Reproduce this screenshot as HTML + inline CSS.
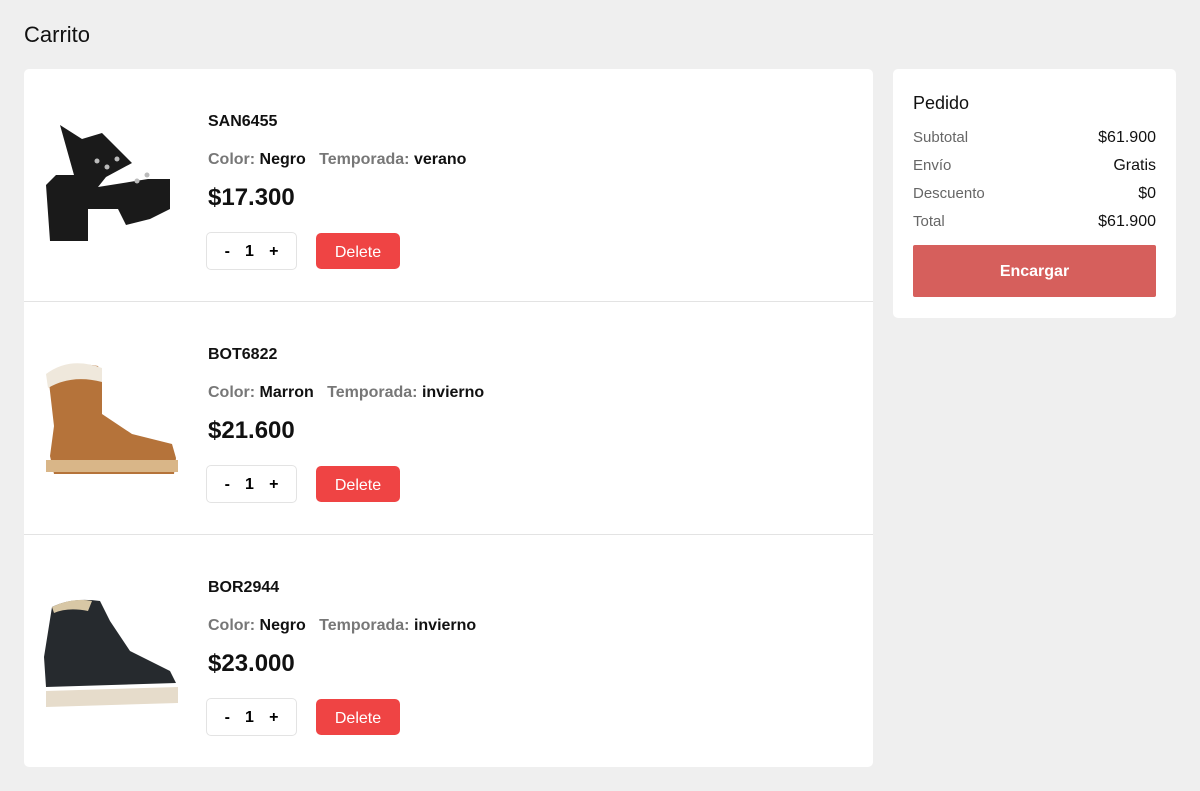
<!DOCTYPE html>
<html><head><style>
*{box-sizing:border-box;margin:0;padding:0}
body{width:1200px;height:791px;background:#efefef;font-family:"Liberation Sans",sans-serif;position:relative;overflow:hidden}
h1{position:absolute;left:24px;top:22px;font-size:22px;font-weight:400;color:#111}
.card{position:absolute;left:24px;top:69px;width:849px;height:698px;background:#fff;border-radius:5px}
.row{position:absolute;left:0;width:849px;height:233px;border-bottom:1px solid #e3e3e3}
.row:last-child{border-bottom:none}
.img{position:absolute;left:18px;top:52px;width:140px;height:124px}
.code{position:absolute;left:184px;top:44px;font-size:16px;font-weight:700;color:#111}
.meta{position:absolute;left:184px;top:82px;font-size:16px;color:#777;font-weight:700}
.meta b{color:#111}
.price{position:absolute;left:184px;top:115px;font-size:24px;font-weight:700;color:#111}
.qty{position:absolute;left:182px;top:163px;width:91px;height:38px;border:1px solid #e3e3e3;border-radius:5px;font-size:16px;font-weight:700;display:flex;justify-content:space-around;align-items:center;padding:2px 10px 0}
.del{position:absolute;left:292px;top:164px;width:84px;height:36px;background:#ef4444;border-radius:5px;color:#fff;font-size:16px;display:flex;align-items:center;justify-content:center;padding-top:3px}
.sum{position:absolute;left:893px;top:69px;width:283px;height:249px;background:#fff;border-radius:5px}
.sum h2{position:absolute;left:20px;top:24px;font-size:18px;font-weight:400;color:#111}
.line{position:absolute;left:20px;width:243px;display:flex;justify-content:space-between;font-size:15px}
.line span:first-child{color:#666}
.line span:last-child{color:#111;font-size:16px}
.btn{position:absolute;left:20px;top:176px;width:243px;height:52px;background:#d65f5c;border-radius:2px;color:#fff;font-weight:700;font-size:16px;display:flex;align-items:center;justify-content:center;padding-top:2px}
</style></head><body>
<h1>Carrito</h1>
<div class="card">
 <div class="row" style="top:0">
  <svg class="img" viewBox="0 0 140 124"><path d="M18 4l22 14 20-6 30 30 -26 14 -8 10 50-8 22 0 0 30 -20 10 -24 6 -8 -16 -30 0 0 32 -38 0 -4 -56 10 -10 18 0z" fill="#1a1a1a"/><circle cx="55" cy="40" r="2.5" fill="#bbb"/><circle cx="65" cy="46" r="2.5" fill="#bbb"/><circle cx="75" cy="38" r="2.5" fill="#bbb"/><circle cx="95" cy="60" r="2.5" fill="#bbb"/><circle cx="105" cy="54" r="2.5" fill="#bbb"/></svg>
  <div class="code">SAN6455</div>
  <div class="meta">Color: <b>Negro</b>&nbsp;&nbsp; Temporada: <b>verano</b></div>
  <div class="price">$17.300</div>
  <div class="qty"><span>-</span><span>1</span><span>+</span></div>
  <div class="del">Delete</div>
 </div>
 <div class="row" style="top:233px">
  <svg class="img" viewBox="0 0 140 124"><path d="M6 20q20-14 50-8l4 8 0 40 30 20 40 10 4 14 -2 16 -120 0 -4-18 4-30z" fill="#b5733a"/><path d="M4 20q24-18 56-6l0 14q-30-8-54 6z" fill="#efe8dc"/><path d="M4 106l132 0 0 12 -132 0z" fill="#d9b688"/></svg>
  <div class="code">BOT6822</div>
  <div class="meta">Color: <b>Marron</b>&nbsp;&nbsp; Temporada: <b>invierno</b></div>
  <div class="price">$21.600</div>
  <div class="qty"><span>-</span><span>1</span><span>+</span></div>
  <div class="del">Delete</div>
 </div>
 <div class="row" style="top:466px">
  <svg class="img" viewBox="0 0 140 124"><path d="M10 20q20-10 48-6l10 20 20 30 40 20 6 12 -130 4 -2-30z" fill="#262a2e"/><path d="M10 20q20-10 40-6l-4 10q-20-4-34 2z" fill="#d8c7a5"/><path d="M4 104l132 -4 0 16 -132 4z" fill="#e6dccb"/></svg>
  <div class="code">BOR2944</div>
  <div class="meta">Color: <b>Negro</b>&nbsp;&nbsp; Temporada: <b>invierno</b></div>
  <div class="price">$23.000</div>
  <div class="qty"><span>-</span><span>1</span><span>+</span></div>
  <div class="del">Delete</div>
 </div>
</div>
<div class="sum">
 <h2>Pedido</h2>
 <div class="line" style="top:60px"><span>Subtotal</span><span>$61.900</span></div>
 <div class="line" style="top:88px"><span>Envío</span><span>Gratis</span></div>
 <div class="line" style="top:116px"><span>Descuento</span><span>$0</span></div>
 <div class="line" style="top:144px"><span>Total</span><span>$61.900</span></div>
 <div class="btn">Encargar</div>
</div>
</body></html>
